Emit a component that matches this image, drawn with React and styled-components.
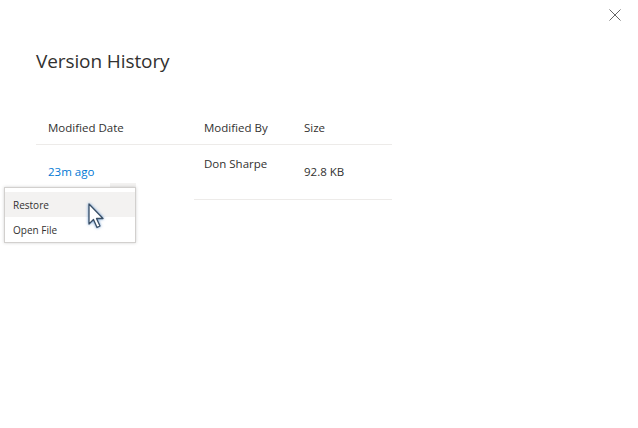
import React from "react";
import styled, { createGlobalStyle } from "styled-components";

const Global = createGlobalStyle`
  html, body { margin: 0; padding: 0; background: #fff; }
  body { font-family: "Open Sans", "Noto Sans", sans-serif; color: #323130; }
  * { box-sizing: border-box; }
`;

const Page = styled.div`
  position: relative;
  width: 638px;
  height: 428px;
  background: #fff;
  overflow: hidden;
`;

const Close = styled.button`
  position: absolute;
  top: 8px;
  right: 16px;
  width: 14px;
  height: 14px;
  padding: 0;
  border: 0;
  background: none;
  display: flex;
`;

const Panel = styled.div`
  display: flex;
  flex-direction: column;
  padding: 47px 0 0 36px;
  width: 392px;
`;

const Title = styled.h1`
  margin: 0;
  font-size: 19px;
  font-weight: 400;
  line-height: 28px;
  color: #323130;
  letter-spacing: -0.1px;
`;

const Table = styled.div`
  margin-top: 35px;
  display: flex;
  flex-direction: column;
`;

const Row = styled.div`
  display: grid;
  grid-template-columns: 156px 100px 1fr;
  padding-left: 12px;
  height: ${(p) => p.$h}px;
  border-bottom: 1px solid #edebe9;
  align-items: center;
`;

const HeadCell = styled.div`
  font-size: 11.5px;
  color: #323130;
`;

const Cell = styled.div`
  font-size: 11.5px;
  color: ${(p) => (p.$link ? "#0078d4" : "#323130")};
  padding-top: ${(p) => p.$top}px;
`;

const DataRow = styled.div`
  position: relative;
  display: grid;
  grid-template-columns: 156px 100px 1fr;
  padding-left: 12px;
  height: 55px;
`;

const RowLine = styled.div`
  position: absolute;
  left: 158px;
  right: 0;
  bottom: 0;
  border-bottom: 1px solid #edebe9;
`;

const Menu = styled.div`
  position: absolute;
  left: 4px;
  top: 187px;
  width: 132px;
  background: #fff;
  border: 1px solid #d2d0ce;
  box-shadow: 0 0 3px rgba(0, 0, 0, 0.18);
  padding: 4px 0 0;
  display: flex;
  flex-direction: column;
`;

const MenuItem = styled.div`
  height: 25px;
  display: flex;
  align-items: center;
  padding-left: 8px;
  font-size: 10px;
  color: #323130;
  background: ${(p) => (p.$active ? "#f3f2f1" : "transparent")};
`;

const Strip = styled.div`
  position: absolute;
  left: 110px;
  top: 183px;
  width: 26px;
  height: 5px;
  background: #f3f2f1;
`;

const Cursor = styled.svg`
  position: absolute;
  left: 86px;
  top: 202px;
  filter: drop-shadow(0 0 1.5px rgba(70, 130, 200, 0.8));
`;

export default function App() {
  return (
    <Page>
      <Global />
      <Close aria-label="Close">
        <svg width="14" height="14" viewBox="0 0 14 14">
          <path d="M1.5 1.5 L12.5 12.5 M12.5 1.5 L1.5 12.5" stroke="#666" strokeWidth="1" fill="none" />
        </svg>
      </Close>
      <Panel>
        <Title>Version History</Title>
        <Table>
          <Row $h={35}>
            <HeadCell>Modified Date</HeadCell>
            <HeadCell>Modified By</HeadCell>
            <HeadCell>Size</HeadCell>
          </Row>
          <DataRow>
            <Cell $link $top={19}>23m ago</Cell>
            <Cell $top={11}>Don Sharpe</Cell>
            <Cell $top={19}>92.8 KB</Cell>
            <RowLine />
          </DataRow>
        </Table>
      </Panel>
      <Strip />
      <Menu>
        <MenuItem $active>Restore</MenuItem>
        <MenuItem>Open File</MenuItem>
      </Menu>
      <Cursor width="22" height="30" viewBox="0 0 22 30">
        <path
          d="M3 2 L3 22 L7.5 17.5 L11 25.5 L14 24 L10.5 16.5 L17 16.5 Z"
          fill="#fff"
          stroke="#3a4f66"
          strokeWidth="1.3"
          strokeLinejoin="round"
        />
      </Cursor>
    </Page>
  );
}
